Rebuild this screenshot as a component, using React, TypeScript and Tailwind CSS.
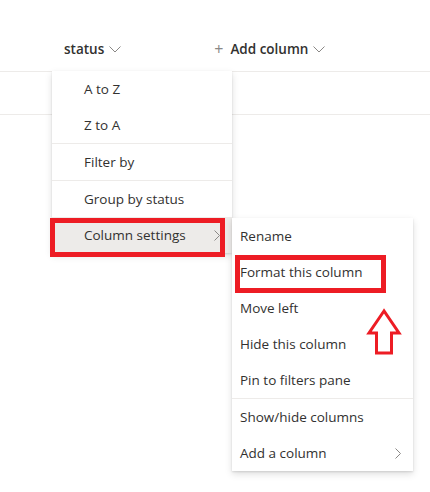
import React from "react";

const font = { fontFamily: '"Segoe UI", "Open Sans", "Noto Sans", sans-serif' };

function ChevronDown() {
  return (
    <svg width="12" height="7" viewBox="0 0 12 7" className="ml-[5px] mt-[1px]">
      <path d="M0.5 0.5 L6 6 L11.5 0.5" fill="none" stroke="#8a8886" strokeWidth="1" />
    </svg>
  );
}

function ChevronRight() {
  return (
    <svg width="6" height="11" viewBox="0 0 6 11">
      <path d="M0.5 0.5 L5.5 5.5 L0.5 10.5" fill="none" stroke="#8a8886" strokeWidth="1" />
    </svg>
  );
}

function Item({ label, pad, chevron, active }: { label: string; pad: string; chevron?: boolean; active?: boolean }) {
  return (
    <div
      className={`h-[36px] flex items-center justify-between ${pad} pr-[12px] text-[13.5px] text-[#323130] ${active ? "bg-[#edebe9]" : ""}`}
    >
      <span>{label}</span>
      {chevron && <ChevronRight />}
    </div>
  );
}

export default function App() {
  return (
    <div className="relative w-[430px] h-[492px] bg-white overflow-hidden" style={font}>
      {/* header */}
      <div className="h-[72px] border-b border-[#edebe9] flex items-end pb-[12px] pl-[64px]">
        <div className="flex items-center text-[13.5px] font-semibold text-[#323130] leading-[20px]">
          <span>status</span>
          <ChevronDown />
        </div>
        <div className="flex items-center ml-[93px] text-[13.5px] font-semibold text-[#323130] leading-[20px]">
          <span className="text-[#8a8886] font-normal text-[16px] mr-[7px] leading-[20px]">+</span>
          <span>Add column</span>
          <ChevronDown />
        </div>
      </div>
      <div className="h-[43px] border-b border-[#edebe9]" />

      {/* main menu */}
      <div className="absolute left-[52px] top-[71px] w-[180px] bg-white shadow-[0_3.2px_7.2px_rgba(0,0,0,0.132),0_0.6px_1.8px_rgba(0,0,0,0.108)]">
        <Item label="A to Z" pad="pl-[32px]" />
        <Item label="Z to A" pad="pl-[32px]" />
        <div className="h-px bg-[#edebe9]" />
        <Item label="Filter by" pad="pl-[32px]" />
        <div className="h-px bg-[#edebe9]" />
        <Item label="Group by status" pad="pl-[32px]" />
        <Item label="Column settings" pad="pl-[32px]" chevron active />
      </div>

      {/* submenu */}
      <div className="absolute left-[232px] top-[218px] w-[181px] bg-white shadow-[0_3.2px_7.2px_rgba(0,0,0,0.132),0_0.6px_1.8px_rgba(0,0,0,0.108)]">
        <Item label="Rename" pad="pl-[8px]" />
        <Item label="Format this column" pad="pl-[8px]" />
        <Item label="Move left" pad="pl-[8px]" />
        <Item label="Hide this column" pad="pl-[8px]" />
        <Item label="Pin to filters pane" pad="pl-[8px]" />
        <div className="h-px bg-[#edebe9]" />
        <Item label="Show/hide columns" pad="pl-[8px]" />
        <Item label="Add a column" pad="pl-[8px]" chevron />
      </div>

      {/* annotations */}
      <div className="absolute left-[50px] top-[218px] w-[175px] h-[39px] border-[5px] border-[#ed1c24]" />
      <div className="absolute left-[235px] top-[255px] w-[151px] h-[38px] border-[5px] border-[#ed1c24]" />
      <svg className="absolute left-[366px] top-[308px]" width="36" height="48" viewBox="366 308 36 48">
        <polygon
          points="384,311 369,333 376.5,333 376.5,353 391.5,353 391.5,333 399,333"
          fill="none"
          stroke="#ed1c24"
          strokeWidth="3"
          strokeLinejoin="miter"
        />
      </svg>
    </div>
  );
}
